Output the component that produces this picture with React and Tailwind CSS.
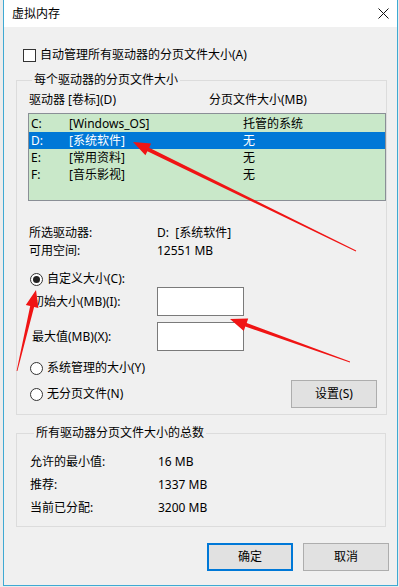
// Windows 10 "虚拟内存" (virtual memory) dialog, with the red annotation arrows drawn on top.

const FONT = { fontFamily: '"Noto Sans", "Noto Sans CJK SC", sans-serif' }

const DRIVES = [
  { letter: 'C:', label: '[Windows_OS]', size: '托管的系统' },
  { letter: 'D:', label: '[系统软件]', size: '无', selected: true },
  { letter: 'E:', label: '[常用资料]', size: '无' },
  { letter: 'F:', label: '[音乐影视]', size: '无' },
]

const TOTALS = [
  { label: '允许的最小值:', value: '16 MB' },
  { label: '推荐:', value: '1337 MB' },
  { label: '当前已分配:', value: '3200 MB' },
]

// tail (x, y) -> tip (x, y)
const ARROWS = [
  [356, 251, 133, 142],
  [17, 371, 36, 290],
  [350, 362, 230, 319],
]

function arrowPoints([tx, ty, px, py]) {
  const dx = px - tx
  const dy = py - ty
  const len = Math.hypot(dx, dy)
  const ux = dx / len
  const uy = dy / len
  const nx = -uy
  const ny = ux
  const bx = px - ux * 17
  const by = py - uy * 17
  const pts = [
    [tx + nx * 0.4, ty + ny * 0.4],
    [bx + nx * 2, by + ny * 2],
    [bx + nx * 6.5, by + ny * 6.5],
    [px, py],
    [bx - nx * 6.5, by - ny * 6.5],
    [bx - nx * 2, by - ny * 2],
    [tx - nx * 0.4, ty - ny * 0.4],
  ]
  return pts.map((p) => p.map((v) => v.toFixed(1)).join(',')).join(' ')
}

function Radio({ checked, children }) {
  return (
    <div className="flex items-center">
      <span className="flex h-[13px] w-[13px] items-center justify-center rounded-full border border-[#333] bg-white">
        {checked && <span className="h-[7px] w-[7px] rounded-full bg-[#222]" />}
      </span>
      <span className="ml-[4px]">{children}</span>
    </div>
  )
}

function Button({ primary, children }) {
  return (
    <button
      className={
        primary
          ? 'flex h-[28px] w-[86px] items-center justify-center border-2 border-[#0078d7] bg-[#e1e1e1]'
          : 'flex h-[28px] w-[86px] items-center justify-center border border-[#adadad] bg-[#e1e1e1]'
      }
    >
      {children}
    </button>
  )
}

export default function App() {
  return (
    <div className="relative h-[587px] w-[399px] bg-[#ececec] pl-[3px] pr-[1px] text-[12px] leading-[16px] text-black" style={FONT}>
      <div className="flex h-[586px] flex-col border-x border-b border-[#3fa9d3] bg-[#f0f0f0]">
        {/* title bar */}
        <div className="flex h-[27px] items-center justify-between bg-white pl-[8px] pr-[8px]">
          <span>虚拟内存</span>
          <svg width="11" height="11" viewBox="0 0 11 11">
            <path d="M0.5 0.5 L10.5 10.5 M10.5 0.5 L0.5 10.5" stroke="#111" strokeWidth="1" />
          </svg>
        </div>

        <div className="flex flex-col pl-[12px]">
          <div className="mt-[20px] flex items-center pl-[7px]">
            <span className="h-[13px] w-[13px] border border-[#333] bg-white" />
            <span className="ml-[4px]">自动管理所有驱动器的分页文件大小(A)</span>
          </div>

          <fieldset className="mt-[9px] w-[370px] border border-[#dcdcdc] pb-[6px] pl-[11px]">
            <legend className="ml-[4px] px-[2px]">每个驱动器的分页文件大小</legend>
            <div className="mt-[4px] flex pl-[1px]">
              <span className="w-[180px]">驱动器 [卷标](D)</span>
              <span>分页文件大小(MB)</span>
            </div>
            <div className="mt-[5px] h-[88px] w-[358px] border border-[#8a8f96] bg-[#c9e8c9] pt-[1px]">
              {DRIVES.map((d) => (
                <div
                  key={d.letter}
                  className={d.selected ? 'flex h-[17px] items-center bg-[#0078d7] pl-[2px] text-white' : 'flex h-[17px] items-center pl-[2px]'}
                >
                  <span className="w-[38px]">{d.letter}</span>
                  <span className="w-[174px]">{d.label}</span>
                  <span>{d.size}</span>
                </div>
              ))}
            </div>

            <div className="mt-[24px] flex pl-[1px]">
              <span className="w-[128px]">所选驱动器:</span>
              <span>D:&nbsp;&nbsp;[系统软件]</span>
            </div>
            <div className="mt-[2px] flex pl-[1px]">
              <span className="w-[128px]">可用空间:</span>
              <span>12551 MB</span>
            </div>

            <div className="mt-[12px] pl-[2px]">
              <Radio checked>自定义大小(C):</Radio>
            </div>
            <div className="flex h-[29px] items-center pl-[4px]">
              <span className="w-[125px]">初始大小(MB)(I):</span>
              <span className="h-[29px] w-[87px] border border-[#7a7a7a] bg-white" />
            </div>
            <div className="mt-[6px] flex h-[29px] items-center pl-[4px]">
              <span className="w-[125px]">最大值(MB)(X):</span>
              <span className="h-[29px] w-[87px] border border-[#7a7a7a] bg-white" />
            </div>
            <div className="mt-[9px] pl-[2px]">
              <Radio>系统管理的大小(Y)</Radio>
            </div>
            <div className="mt-[4px] flex h-[28px] items-center justify-between pl-[2px] pr-[9px]">
              <Radio>无分页文件(N)</Radio>
              <Button>设置(S)</Button>
            </div>
          </fieldset>

          <fieldset className="mt-[10px] w-[370px] border border-[#dcdcdc] pb-[10px] pl-[13px]">
            <legend className="ml-[4px] px-[2px]">所有驱动器分页文件大小的总数</legend>
            {TOTALS.map((t, i) => (
              <div key={t.label} className={i === 0 ? 'mt-[13px] flex' : 'mt-[7px] flex'}>
                <span className="w-[128px]">{t.label}</span>
                <span>{t.value}</span>
              </div>
            ))}
          </fieldset>
        </div>

        <div className="mt-[16px] flex justify-end gap-[10px] pr-[8px]">
          <Button primary>确定</Button>
          <Button>取消</Button>
        </div>
      </div>

      {/* annotation arrows */}
      <svg className="pointer-events-none absolute left-0 top-0" width="399" height="587">
        {ARROWS.map((a, i) => (
          <polygon key={i} points={arrowPoints(a)} fill="#f01414" />
        ))}
      </svg>
    </div>
  )
}
